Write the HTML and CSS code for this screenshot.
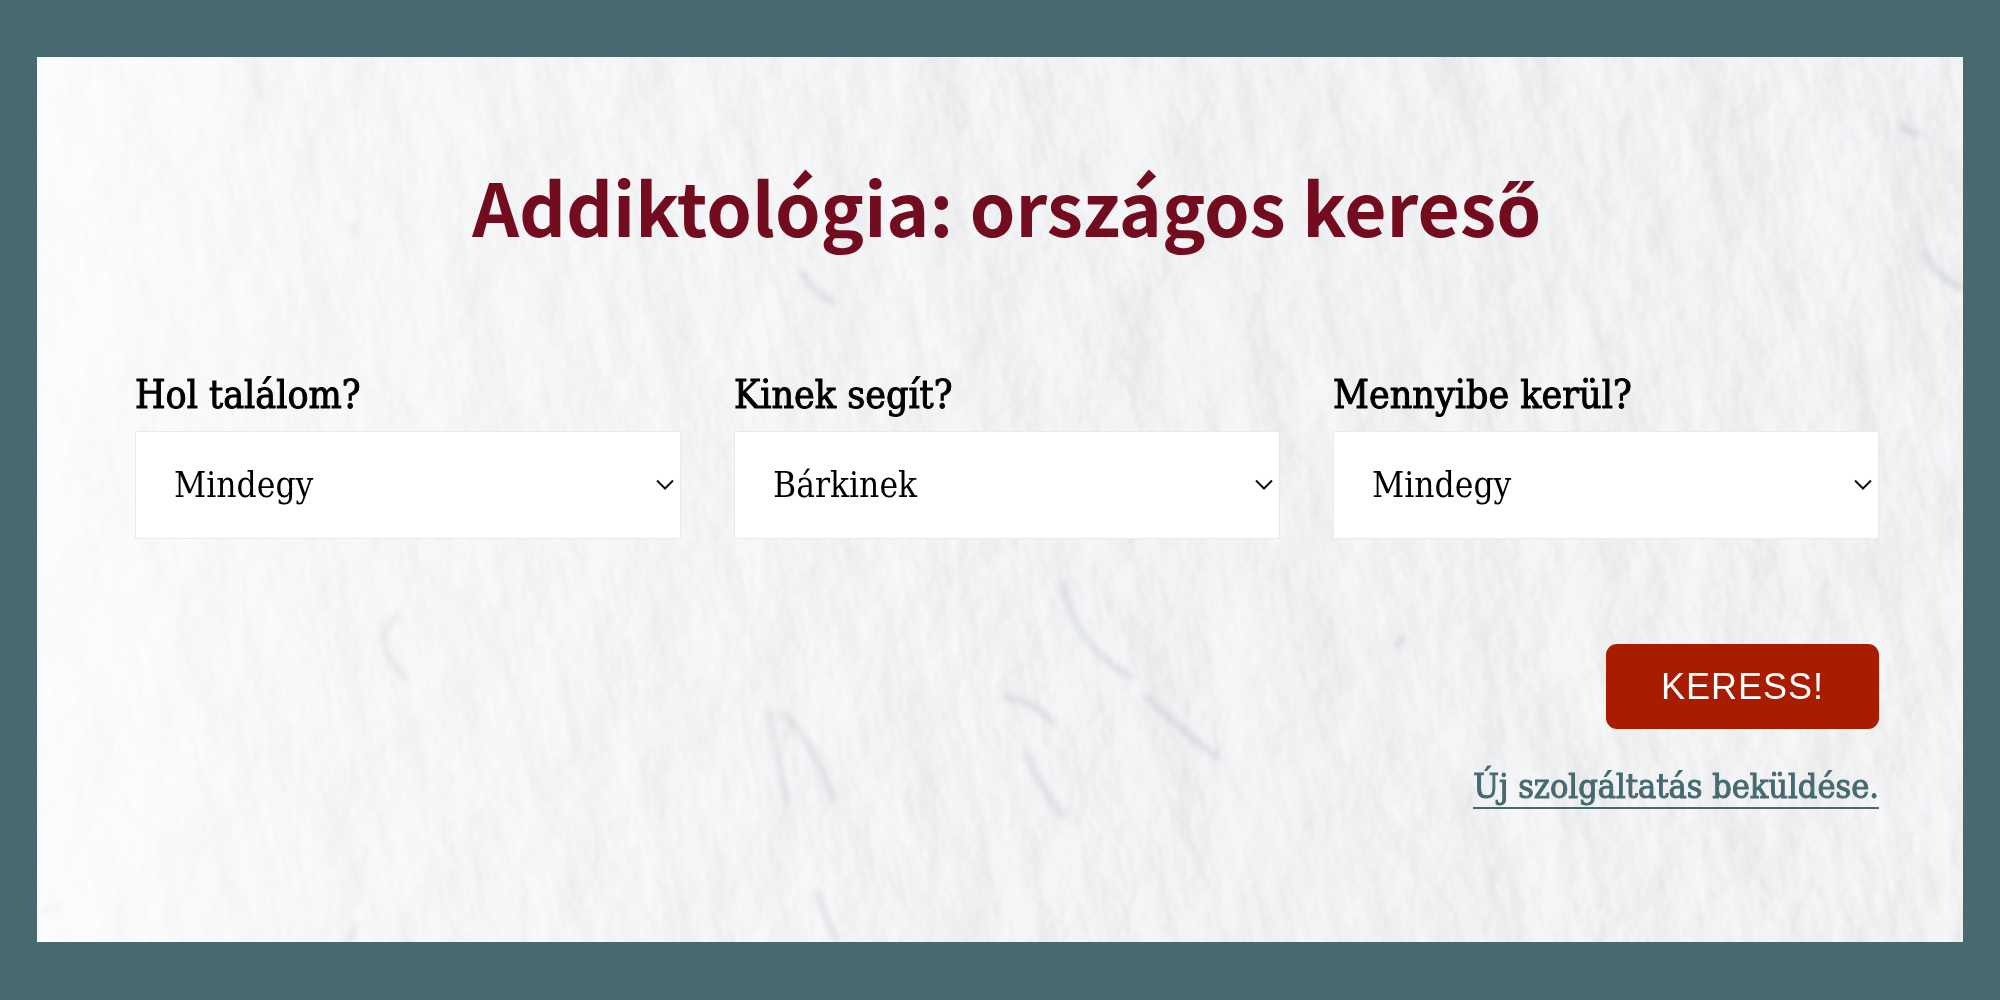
FILE: index.html
```html
<!DOCTYPE html>
<html lang="hu">

<head>
    <title>Addiktológia: országos kereső</title>
    <meta charset="UTF-8">
    <meta name="viewport" content="width=device-width, initial-scale=1.0">
    <link rel="stylesheet" href="styles.css">
</head>

<body>

    <main class="search-card">

        <!-- Plaster wall behind the form -->
        <svg class="plaster" viewBox="0 0 1926 885" preserveAspectRatio="xMidYMid slice" aria-hidden="true">
            <defs>
                <filter id="rough" x="0" y="0" width="100%" height="100%" color-interpolation-filters="sRGB">
                    <feTurbulence type="fractalNoise" baseFrequency="0.012 0.008" numOctaves="5" seed="23" result="noise"/>
                    <feDiffuseLighting in="noise" surfaceScale="4" diffuseConstant="1.13" lighting-color="#f1f2f4">
                        <feDistantLight azimuth="200" elevation="62"/>
                    </feDiffuseLighting>
                    <feGaussianBlur stdDeviation="1"/>
                </filter>
                <filter id="soft" x="-10%" y="-10%" width="120%" height="120%">
                    <feGaussianBlur stdDeviation="3"/>
                </filter>
                <linearGradient id="light" x1="0" x2="1" y1="0" y2="0">
                    <stop offset="0" stop-color="#fff" stop-opacity="0.75"/>
                    <stop offset="0.15" stop-color="#fff" stop-opacity="0.4"/>
                    <stop offset="0.5" stop-color="#fff" stop-opacity="0.1"/>
                    <stop offset="1" stop-color="#fff" stop-opacity="0"/>
                </linearGradient>
            </defs>
            <rect width="1926" height="885" fill="#f1f2f4"/>
            <g transform="rotate(-12 963 442)" opacity="0.4">
                <rect x="-200" y="-300" width="2330" height="1500" filter="url(#rough)"/>
            </g>
            <g class="cracks" filter="url(#soft)">
                <path d="M1024 525 q8 20 14 38 q20 38 55 56 M1110 640 q30 30 70 60"/>
                <path d="M732 655 q8 40 18 92 M748 658 q30 30 48 84"/>
                <path d="M360 558 q-22 20 -8 42 q8 14 18 22"/>
                <path d="M968 640 q30 4 48 26 M990 696 q10 30 36 64"/>
                <path d="M217 2 q2 20 6 38 M766 215 q8 20 30 30"/>
                <path d="M1888 195 q10 24 36 36 M1864 70 l18 8"/>
                <path d="M1360 588 l6 -6 M2 858 q10 -10 22 -8 M315 168 l4 8"/>
                <path d="M780 835 q10 30 20 48 M320 868 l-8 16"/>
            </g>
            <rect width="1926" height="885" fill="url(#light)"/>
        </svg>

        <h1 class="title">Addiktológia: országos kereső</h1>

        <form class="search-form">
            <div class="filters">
                <div class="field">
                    <label for="hol">Hol találom?</label>
                    <div class="select-wrap">
                        <select id="hol" name="hol">
                            <option>Mindegy</option>
                        </select>
                        <svg class="arrow" viewBox="0 0 18 12" aria-hidden="true"><path d="M1 1.5 L9 9.5 L17 1.5"/></svg>
                    </div>
                </div>
                <div class="field">
                    <label for="kinek">Kinek segít?</label>
                    <div class="select-wrap">
                        <select id="kinek" name="kinek">
                            <option>Bárkinek</option>
                        </select>
                        <svg class="arrow" viewBox="0 0 18 12" aria-hidden="true"><path d="M1 1.5 L9 9.5 L17 1.5"/></svg>
                    </div>
                </div>
                <div class="field">
                    <label for="mennyi">Mennyibe kerül?</label>
                    <div class="select-wrap">
                        <select id="mennyi" name="mennyi">
                            <option>Mindegy</option>
                        </select>
                        <svg class="arrow" viewBox="0 0 18 12" aria-hidden="true"><path d="M1 1.5 L9 9.5 L17 1.5"/></svg>
                    </div>
                </div>
            </div>

            <div class="actions">
                <button type="submit" class="search-button">KERESS!</button>
                <a class="submit-link" href="#">Új szolgáltatás beküldése.</a>
            </div>
        </form>

    </main>

</body>
</html>
```

FILE: styles.css
```css
/* Basic Reset */
* {
    box-sizing: border-box;
    margin: 0;
    padding: 0;
}

body {
    min-height: 100vh;
    padding: 57px 37px;
    background-color: #476a71;
    color: #000;
    font-family: 'DejaVu Serif Condensed', 'DejaVu Serif', serif;
}

/* Card */
.search-card {
    position: relative;
    padding: 88px 84px 133px 98px;
    background: #f1f2f4;
    overflow: hidden;
}

.plaster {
    position: absolute;
    top: 0;
    left: 0;
    width: 100%;
    height: 100%;
}

.cracks path {
    fill: none;
    stroke: #b4b7bb;
    stroke-width: 5;
    stroke-linecap: round;
    opacity: 0.5;
}

.title {
    position: relative;
    margin-bottom: 104px;
    color: #730c1f;
    font-family: 'Noto Sans CJK SC', 'Noto Sans', sans-serif;
    font-size: 73px;
    font-weight: 700;
    line-height: 120px;
    text-align: center;
}

/* Form */
.search-form {
    position: relative;
}

.filters {
    display: grid;
    grid-template-columns: repeat(3, 1fr);
    gap: 53px;
}

.field label {
    display: block;
    margin-bottom: 10px;
    font-size: 39px;
    line-height: 52px;
    -webkit-text-stroke: 1px;
}

.select-wrap {
    position: relative;
}

.select-wrap select {
    display: block;
    width: 100%;
    height: 108px;
    padding: 0 40px 0 38px;
    appearance: none;
    background: #fff;
    border: 1px solid #e9eaeb;
    border-radius: 0;
    color: #000;
    font-family: inherit;
    font-size: 35px;
}

.arrow {
    position: absolute;
    top: 48px;
    right: 7px;
    width: 18px;
    height: 12px;
    pointer-events: none;
}

.arrow path {
    fill: none;
    stroke: #111;
    stroke-width: 2;
}

.actions {
    display: flex;
    flex-direction: column;
    align-items: flex-end;
    gap: 36px;
    margin-top: 105px;
}

.search-button {
    height: 85px;
    padding: 0 55px;
    background-color: #a81c00;
    border: none;
    border-radius: 11px;
    color: #fff;
    font-family: 'Liberation Sans', Arial, sans-serif;
    font-size: 36px;
    letter-spacing: 1px;
    cursor: pointer;
}

.submit-link {
    border-bottom: 2px solid #476a71;
    color: #476a71;
    font-size: 34px;
    line-height: 42px;
    text-decoration: none;
    -webkit-text-stroke: 1px;
}
```
